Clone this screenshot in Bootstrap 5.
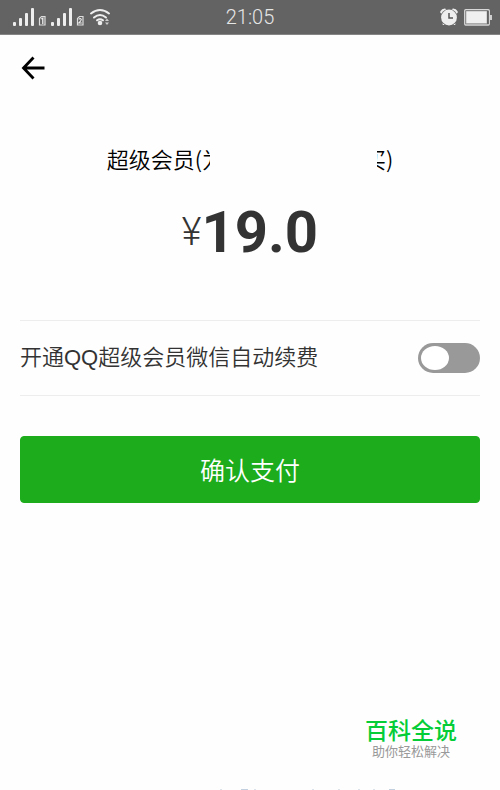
<!DOCTYPE html>
<html lang="zh-CN">
<head>
<meta charset="utf-8">
<meta name="viewport" content="width=device-width, initial-scale=1">
<title>确认支付</title>
<link href="https://cdn.jsdelivr.net/npm/bootstrap@5.3.0/dist/css/bootstrap.min.css" rel="stylesheet">
<style>
body { font-family: "Liberation Sans", "Noto Sans CJK SC", sans-serif; background: #fefefe; color: #333; }
.status-bar { background: #636363; color: #e6e6e6; height: 35px; font: 300 20px/36px Roboto, sans-serif; border-bottom: 1px solid #858585; }
.status-side { flex: 1 1 0; }
.top-nav { height: 66px; padding: 0 21px; }
.back-link { color: #000; }
.pay-title { font: 350 22px/32px "Noto Sans CJK SC", sans-serif; color: #000; margin-top: 41px; }
.clip-start { width: 8px; overflow: hidden; }
.clip-end { width: 9px; overflow: hidden; }
.hidden-name { width: 167px; }
.price { font-family: Roboto, sans-serif; line-height: 70px; margin-top: 22px; }
.price-sign { font-size: 38px; font-weight: 300; }
.price-value { font-size: 58px; font-weight: 700; }
.pay-body { padding: 0 20px; }
.renew-row { margin-top: 53px; height: 76px; border: solid #ededed; border-width: 1px 0; }
.renew-label { font: 350 22px/32px "Liberation Sans", "Noto Sans CJK SC", sans-serif; color: #333; }
.renew-switch { appearance: none; width: 62px; height: 30px; border-radius: 15px; background: #999; padding: 3px; }
.renew-switch::before { content: ""; display: block; width: 28px; height: 24px; border-radius: 50%; background: #fff; }
.renew-switch:checked { background: #1aad19; }
.renew-switch:checked::before { margin-left: 28px; }
.pay-btn { --bs-btn-bg: #1dac1b; --bs-btn-color: #fff; --bs-btn-border-color: #1dac1b; --bs-btn-hover-bg: #179b16; --bs-btn-hover-color: #fff; margin-top: 40px; height: 67px; border-radius: 4px; font: 350 25px/36px "Noto Sans CJK SC", sans-serif; }
.brand { padding: 0 43px 29px 0; }
.brand-inner { font-family: "Noto Sans CJK SC", sans-serif; }
.brand-name { font-size: 23px; line-height: 26px; font-weight: 500; color: #05cd38; }
.brand-note { font-size: 13px; line-height: 18px; color: #999; }
</style>
<script src="https://cdn.jsdelivr.net/npm/bootstrap@5.3.0/dist/js/bootstrap.bundle.min.js"></script>
</head>
<body class="min-vh-100 d-flex flex-column">
<header class="status-bar d-flex align-items-center">
  <div class="status-side d-flex">
    <svg width="116" height="34" viewBox="0 0 116 34" fill="#eee" role="img" aria-label="信号">
      <g id="sig"><rect x="13" y="22" width="3" height="4" rx="1"/><rect x="19" y="18" width="3" height="8" rx="1"/><rect x="25" y="13" width="3" height="13" rx="1"/><rect x="31" y="8" width="3" height="18" rx="1"/></g>
      <use href="#sig" x="38"/>
      <path d="M41.500 16.500h3.500v8.500h-5.500v-6.500z" fill="none" stroke="#ddd" stroke-width="1.200"/><path d="M41.300 19l1.500-.8V24" fill="none" stroke="#eee" stroke-width="1.300"/>
      <path d="M79.500 16.500h3.500v8.500h-5.500v-6.500z" fill="none" stroke="#ddd" stroke-width="1.200"/><path d="M78.800 19.500q1.500-2 2.500 0q0 1-2.500 3.500h3" fill="none" stroke="#eee" stroke-width="1.100"/>
      <g fill="none" stroke="#eee" stroke-width="2" stroke-linecap="round"><path d="M91 13.500q9-7 18 0M94 17.500q6-5 12 0M97 20.300q3-2 6 0"/></g>
      <circle cx="100" cy="23" r="2.300"/><path d="M105 21l2-2.500 2 2.500zM105 22.500l2 2.500 2-2.500z" fill="#ccc"/>
    </svg>
  </div>
  <time>21:05</time>
  <div class="status-side d-flex justify-content-end">
    <svg width="62" height="34" viewBox="0 0 62 34" role="img" aria-label="闹钟与电量">
      <g stroke="#eee" stroke-width="3.200" stroke-linecap="round" fill="none"><path d="M3.800 12q1-2 3-2M15.200 10q2 0 3 2"/><path d="M6 23.500l-.5.5M16 23.500l.5.5" stroke-width="2"/></g>
      <circle cx="11" cy="17.500" r="8.500" fill="#636363"/><circle cx="11" cy="17.500" r="7.900" fill="#eee"/>
      <path d="M11 13v5h4" fill="none" stroke="#555" stroke-width="1.500"/>
      <rect x="26.700" y="9.700" width="24.600" height="15.300" rx="1" fill="none" stroke="#d8d8d8" stroke-width="1.300"/><rect x="28" y="11" width="21" height="12.700" fill="#f0f0f0" stroke="#999" stroke-width=".6"/><path d="M50 11v13" stroke="#555" stroke-width="1"/><rect x="52" y="15" width="2" height="5" fill="#d0d0d0"/>
    </svg>
  </div>
</header>
<nav class="top-nav d-flex align-items-center">
  <a class="back-link d-flex" href="#" aria-label="返回">
    <svg width="24" height="24" viewBox="0 0 24 24" fill="none" stroke="currentColor" stroke-width="2.800"><path d="M23.500 12H3M12.500 1.500L2.500 12l10 10.500"/></svg>
  </a>
</nav>
<main class="pay-body">
  <h1 class="pay-title mb-0 d-flex justify-content-center text-nowrap"><span>超级会员(</span><span class="clip-start">为</span><span class="hidden-name"></span><span class="clip-end d-flex justify-content-end">买</span><span>)</span></h1>
  <div class="price text-center"><span class="price-sign align-middle">¥</span><span class="price-value align-middle">19.0</span></div>
  <div class="renew-row d-flex align-items-center justify-content-between">
    <label class="renew-label" for="renew">开通QQ超级会员微信自动续费</label>
    <input class="renew-switch" type="checkbox" role="switch" id="renew">
  </div>
  <button type="button" class="pay-btn btn w-100">确认支付</button>
</main>
<footer class="mt-auto">
  <div class="brand d-flex justify-content-end">
    <div class="brand-inner text-center"><div class="brand-name">百科全说</div><div class="brand-note">助你轻松解决</div></div>
  </div>
  <svg class="d-block mx-auto" width="300" height="1" viewBox="0 0 300 1" aria-hidden="true"><path d="M141 .5h7M289 .5h6" stroke="#c3d0df"/><path d="M120 .5h2M154 .5h2M212 .5h2M238 .5h2M258 .5h2M273 .5h2" stroke="#dde3ea"/></svg>
</footer>
</body>
</html>
